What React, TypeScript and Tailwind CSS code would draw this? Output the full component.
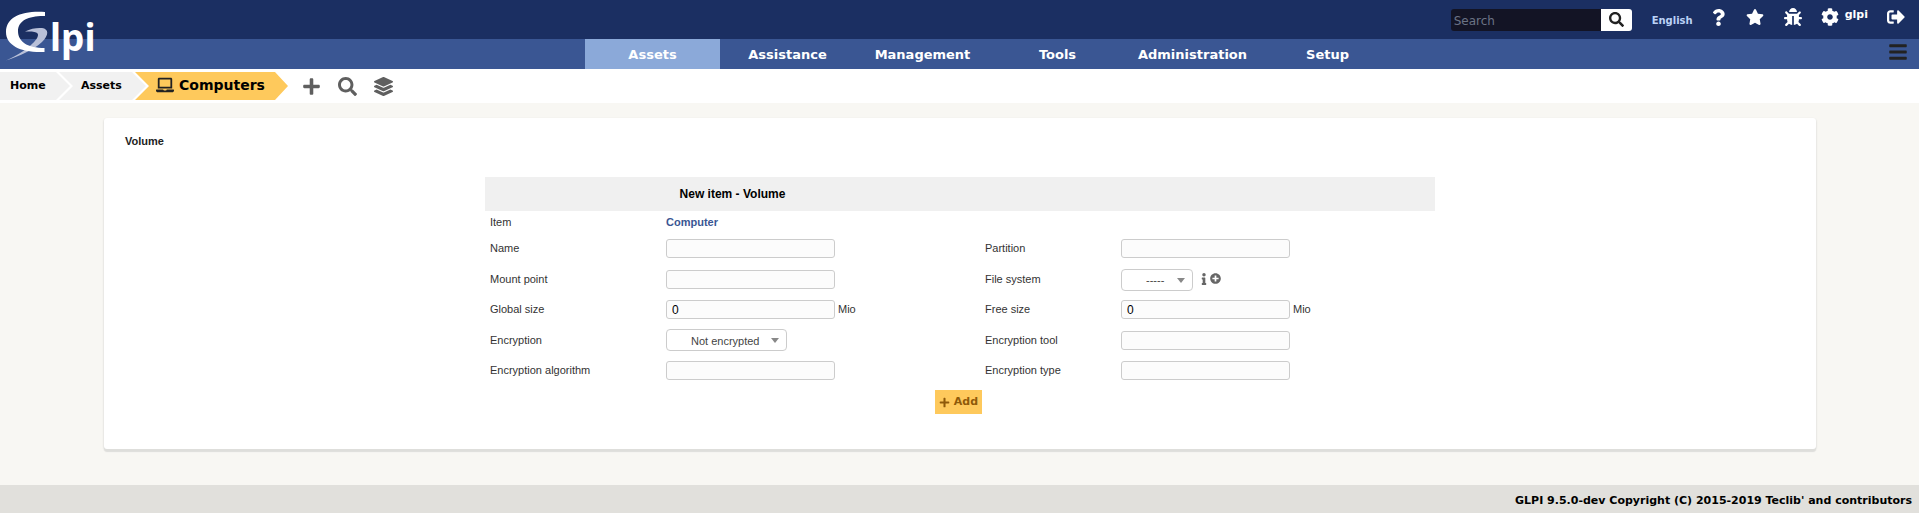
import React from "react";
import {
  FaBars,
  FaBug,
  FaCog,
  FaInfo,
  FaLaptop,
  FaLayerGroup,
  FaPlus,
  FaPlusCircle,
  FaQuestion,
  FaSearch,
  FaSignOutAlt,
  FaStar,
} from "react-icons/fa";

const menu = ["Assets", "Assistance", "Management", "Tools", "Administration", "Setup"];

function Logo() {
  return (
    <svg viewBox="0 0 100 64" className="h-[64px] w-[100px]" aria-label="GLPI" role="img">
      <path
        d="M6 60.500 C17 56 31 47 36.500 39 C40 33 38 31 25 31.500 C31 28.500 37 27.500 42 28 C49 29 49 35 42 42 C33 50 20 56 6 60.500Z"
        fill="#b9c0d8"
      />
      <path
        d="M45 12 C22 10.500 6 17 6 32 C6 46 22 53 44.500 52 L44.500 48 C28 48 18 42 18 31 C18 20 30 15.500 45 16Z"
        fill="#fff"
      />
      <text x="50" y="51" fill="#fff" className="font-['Noto_Sans',sans-serif] text-[37px] font-bold">
        lpi
      </text>
    </svg>
  );
}

function TextField({ id, label, value, unit }: { id: string; label: string; value?: string; unit?: string }) {
  return (
    <>
      <label htmlFor={id} className="px-[5px]">{label}</label>
      <div className="flex items-center gap-[3px] px-[5px]">
        <input
          id={id}
          type="text"
          defaultValue={value}
          className="h-[19px] w-[169px] rounded-[3px] border border-[#cccccc] bg-[#fcfcfc] px-[5px] pt-[1px] text-[12px] text-black"
        />
        {unit && <span>{unit}</span>}
      </div>
    </>
  );
}

function SelectField({
  id,
  label,
  option,
  size,
  children,
}: {
  id: string;
  label: string;
  option: string;
  size: string;
  children?: React.ReactNode;
}) {
  return (
    <>
      <label htmlFor={id} className="px-[5px]">{label}</label>
      <div className="flex items-center px-[5px]">
        <div className="relative">
          <select
            id={id}
            className={`block h-[22px] appearance-none rounded-[4px] border border-[#cccccc] bg-white pt-[2px] pl-[24px] text-[11px] text-[#444444] ${size}`}
          >
            <option>{option}</option>
          </select>
          <svg viewBox="0 0 8 5" className="pointer-events-none absolute top-[9px] right-[8px] h-[5px] w-[8px]">
            <path d="M0 0h8L4 5z" fill="#888" />
          </svg>
        </div>
        {children}
      </div>
    </>
  );
}

export default function App() {
  return (
    <div className="flex min-h-screen flex-col bg-[#f8f7f3] font-['Liberation_Sans',Arial,sans-serif] text-[11px] text-[#333333]">
      <header className="relative font-['DejaVu_Sans',Verdana,sans-serif]">
        <div className="flex h-[39px] items-center justify-end bg-[#1b2f62] pr-[14px] text-white">
          <form className="mt-[1px] flex h-[22px] overflow-hidden rounded-[3px]">
            <input
              type="text"
              placeholder="Search"
              aria-label="Search"
              className="w-[150px] bg-[#131425] px-[3px] pt-[1px] text-[12px] text-white placeholder:text-[#6b7385]"
            />
            <button type="button" aria-label="Run search" className="flex w-[31px] items-center justify-center bg-white pb-[2px] text-[#222]">
              <FaSearch size={15} />
            </button>
          </form>
          <a href="#language" className="mt-[2px] ml-[20px] text-[10px] font-bold text-[#bcd3f7]">English</a>
          <nav aria-label="User" className="mb-[5px] ml-[15px] flex items-center">
            <a href="#help" aria-label="Help" className="flex w-[22px] justify-center"><FaQuestion size={17} /></a>
            <a href="#bookmarks" aria-label="Bookmarks" className="ml-[16px]"><FaStar size={18} /></a>
            <a href="#debug" aria-label="Debug" className="ml-[20px]"><FaBug size={18} /></a>
            <a href="#preferences" className="ml-[19px] flex items-center gap-[6px] text-[11px] font-bold">
              <FaCog size={18} />
              <span className="pb-[4px]">glpi</span>
            </a>
            <a href="#logout" aria-label="Log out" className="ml-[19px]"><FaSignOutAlt size={18} /></a>
          </nav>
        </div>
        <div className="flex h-[30px] bg-[#3a5693] pr-[7px] pl-[96px]">
          <nav aria-label="Main" className="flex flex-1 justify-center text-[13px] font-bold text-white">
            {menu.map((item, i) => (
              <a
                key={item}
                href={`#${item.toLowerCase()}`}
                className={`flex w-[135px] items-center justify-center pt-[2px] ${i === 0 ? "bg-[#8ba9d9]" : ""}`}
              >
                {item}
              </a>
            ))}
          </nav>
          <button type="button" aria-label="Menu" className="flex w-[28px] items-start justify-center pt-[3px] text-[#222]">
            <FaBars size={20} />
          </button>
        </div>
        <a href="#home" className="absolute top-0 left-0">
          <Logo />
        </a>
      </header>

      <div className="flex h-[34px] items-center bg-white font-['DejaVu_Sans',Verdana,sans-serif]">
        <nav aria-label="Breadcrumb" className="flex h-[28px] text-[11px] font-bold text-black">
          <a
            href="#home"
            className="flex w-[70px] items-center bg-[#f1f1f1] pl-[10px] [clip-path:polygon(0_0,calc(100%_-_14px)_0,100%_50%,calc(100%_-_14px)_100%,0_100%)]"
          >
            Home
          </a>
          <a
            href="#assets"
            className="-ml-[11px] flex w-[87px] items-center bg-[#f1f1f1] pl-[22px] [clip-path:polygon(0_0,calc(100%_-_14px)_0,100%_50%,calc(100%_-_14px)_100%,0_100%,14px_50%)]"
          >
            Assets
          </a>
          <a
            href="#computers"
            className="-ml-[11px] flex w-[153px] items-center gap-[5px] bg-[#fec95c] pb-[2px] pl-[21px] text-[14px] [clip-path:polygon(0_0,calc(100%_-_13px)_0,100%_50%,calc(100%_-_13px)_100%,0_100%,14px_50%)]"
          >
            <FaLaptop size={18} className="text-[#222]" />
            Computers
          </a>
        </nav>
        <div className="ml-[14px] flex items-center gap-[17px] text-[#5f5f5f]">
          <button type="button" aria-label="Add"><FaPlus size={19} /></button>
          <button type="button" aria-label="Search"><FaSearch size={19} /></button>
          <button type="button" aria-label="Templates"><FaLayerGroup size={19} /></button>
        </div>
      </div>

      <main className="mt-[15px] mr-[103px] mb-[36px] ml-[104px] flex-1 rounded-[3px] bg-white pt-[16px] shadow-[0_3px_1px_0_#dededb,0_1px_2px_0_#c4c4c4]">
        <h1 className="pl-[21px] text-[11px] leading-[14px] font-bold text-[#222]">Volume</h1>
        <form className="mx-auto mt-[29px] w-[950px]">
          <div className="grid h-[34px] grid-cols-[495px_1fr] items-center bg-[#f0f0f0] text-center text-[12px] font-bold text-black">
            <h2>New item - Volume</h2>
          </div>
          <div className="grid grid-cols-[176px_319px_136px_319px] grid-rows-[22px_31px_31px_29px_32px_29px] items-center">
            <span className="px-[5px]">Item</span>
            <a href="#computer" className="col-span-3 px-[5px] font-bold text-[#3a5693]">Computer</a>
            <TextField id="name" label="Name" />
            <TextField id="partition" label="Partition" />
            <TextField id="mount" label="Mount point" />
            <SelectField id="filesystem" label="File system" option="-----" size="w-[72px]">
              <span className="mb-[2px] ml-[5px] flex items-center text-[#666]">
                <FaInfo size={12} />
                <button type="button" aria-label="Add file system"><FaPlusCircle size={11} /></button>
              </span>
            </SelectField>
            <TextField id="globalsize" label="Global size" value="0" unit="Mio" />
            <TextField id="freesize" label="Free size" value="0" unit="Mio" />
            <SelectField id="encryption" label="Encryption" option="Not encrypted" size="w-[121px]" />
            <TextField id="tool" label="Encryption tool" />
            <TextField id="algorithm" label="Encryption algorithm" />
            <TextField id="type" label="Encryption type" />
          </div>
          <div className="flex justify-center pt-[5px] pr-[3px] pb-[35px]">
            <button
              type="button"
              className="flex h-[24px] items-center gap-[4px] bg-[#fec95c] px-[4px] font-['DejaVu_Sans',Verdana,sans-serif] text-[11px] font-bold text-[#8f5a0a]"
            >
              <FaPlus size={11} />
              Add
            </button>
          </div>
        </form>
      </main>

      <footer className="flex h-[28px] items-center justify-end bg-[#e1e0dc] pt-[4px] pr-[7px] font-['DejaVu_Sans',Verdana,sans-serif] text-[11px] font-bold text-black">
        <a href="#about">GLPI 9.5.0-dev Copyright (C) 2015-2019 Teclib' and contributors</a>
      </footer>
    </div>
  );
}
